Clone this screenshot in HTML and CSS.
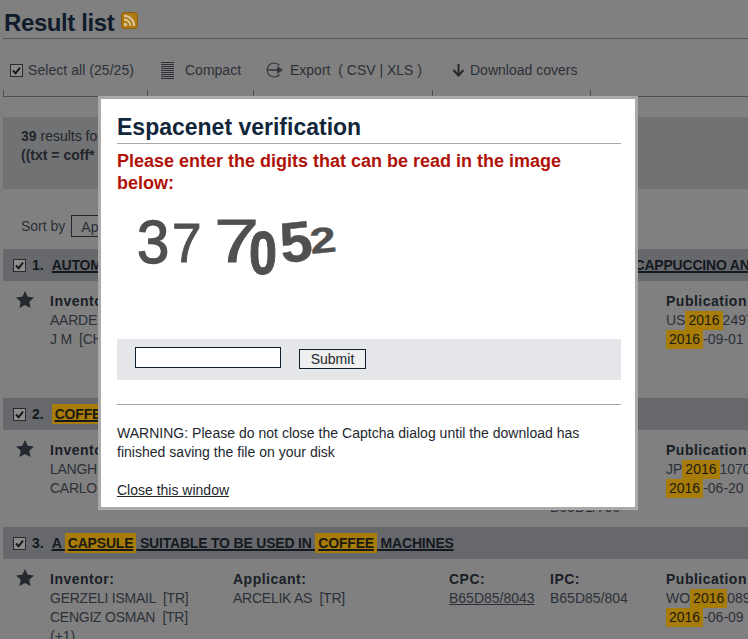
FILE: index.html
```html
<!DOCTYPE html>
<html lang="en">
<head>
  <meta charset="UTF-8">
  <title>Result list</title>
  <link rel="stylesheet" href="styles.css">
</head>
<body>
  <div class="page">
    <div class="title-bar">
      <h1>Result list</h1>
      <svg class="rss" width="17" height="17" viewBox="0 0 17 17">
        <rect x="0.5" y="0.5" width="16" height="16" rx="2.5" fill="#b07a12" stroke="#8a6010"/>
        <circle cx="4.5" cy="12.5" r="1.7" fill="#d8c9a0"/>
        <path d="M3 7.5a6.5 6.5 0 0 1 6.5 6.5M3 3.8a10.2 10.2 0 0 1 10.2 10.2" fill="none" stroke="#d8c9a0" stroke-width="1.9"/>
      </svg>
    </div>

    <div class="toolbar">
      <span class="tool tool-select">
        <svg class="check" width="13" height="13" viewBox="0 0 13 13"><rect x="0.5" y="0.5" width="12" height="12" fill="#8c8c8c" stroke="#2b2b2b"/><path d="M3 6.500l2.600 2.800L10 3.600" fill="none" stroke="#151515" stroke-width="1.900"/></svg>
        Select all (25/25)
      </span>
      <span class="tool tool-compact">
        <svg width="13" height="17" viewBox="0 0 13 17"><path d="M0 .5h13M0 2.500h13M0 4.500h13M0 6.500h13M0 8.500h13M0 10.500h13M0 12.500h13M0 14.500h13M0 16.500h13" stroke="#2d3036" stroke-width="1"/></svg>
        Compact
      </span>
      <span class="tool tool-export">
        <svg width="18" height="16" viewBox="0 0 18 16"><path d="M13.500 3.500A7 7 0 1 0 13.500 12.500" fill="none" stroke="#33363c" stroke-width="1.200"/><path d="M2 8h9" stroke="#33363c" stroke-width="1.600"/><path d="M11 4l6 4-6 4z" fill="#33363c"/></svg>
        Export &nbsp;( CSV | XLS )
      </span>
      <span class="tool tool-covers">
        <svg width="13" height="14" viewBox="0 0 13 14"><path d="M6.500 1v10" stroke="#25282d" stroke-width="2"/><path d="M1.500 7l5 5.500 5-5.500" fill="none" stroke="#25282d" stroke-width="2"/></svg>
        Download covers
      </span>
    </div>
    <div class="ticks">
      <span class="tick tick-1"></span>
      <span class="tick tick-2"></span>
      <span class="tick tick-3"></span>
      <span class="tick tick-4"></span>
      <span class="tick"></span>
    </div>

    <div class="summary">
      <div><b>39</b> results found in the Worldwide database for:</div>
      <div><b>((txt = coff* and txt = capsule) and pd = 2016)</b></div>
    </div>

    <div class="sort">
      <span>Sort by</span>
      <span class="sort-select">Applicant</span>
    </div>

    <div class="result">
      <div class="result-head">
        <svg class="check" width="13" height="13" viewBox="0 0 13 13"><rect x="0.5" y="0.5" width="12" height="12" fill="#8c8c8c" stroke="#2b2b2b"/><path d="M3 6.500l2.600 2.800L10 3.600" fill="none" stroke="#151515" stroke-width="1.900"/></svg>
        <span class="num">1.</span>
        <a class="result-title">AUTOMATIC MACHINE FOR THE PREPARATION OF MILK FOAM FOR CAFFE LATTE AND CAPPUCCINO AND ESPRESSO</a>
      </div>
      <div class="result-body body-1">
        <svg class="star" width="18" height="17" viewBox="0 0 18 17"><path d="M9 0l2.700 5.800 6.300.7-4.700 4.300 1.300 6.200L9 13.900 3.400 17l1.300-6.200L0 6.500l6.300-.7z"/></svg>
        <div class="cols">
          <div><b>Inventor:</b><br><span class="names">AARDEN HENDRIK &nbsp;[NL]<br>J M &nbsp;[CH]</span></div>
          <div><b>Applicant:</b><br><span class="names">NESTEC SA &nbsp;[CH]</span></div>
          <div><b>CPC:</b><br><a>A47J31/40</a></div>
          <div><b>IPC:</b><br>A47J31/40</div>
          <div><b>Publication</b><br>US<mark>2016</mark>2497<br><mark>2016</mark>-09-01</div>
        </div>
      </div>
    </div>

    <div class="result">
      <div class="result-head">
        <svg class="check" width="13" height="13" viewBox="0 0 13 13"><rect x="0.5" y="0.5" width="12" height="12" fill="#8c8c8c" stroke="#2b2b2b"/><path d="M3 6.500l2.600 2.800L10 3.600" fill="none" stroke="#151515" stroke-width="1.900"/></svg>
        <span class="num">2.</span>
        <a class="result-title"><mark>COFFEE</mark> CAPSULE</a>
      </div>
      <div class="result-body">
        <svg class="star" width="18" height="17" viewBox="0 0 18 17"><path d="M9 0l2.700 5.800 6.300.7-4.700 4.300 1.300 6.200L9 13.900 3.400 17l1.300-6.200L0 6.500l6.300-.7z"/></svg>
        <div class="cols">
          <div><b>Inventor:</b><br><span class="names">LANGHI MARCO<br>CARLO</span></div>
          <div><b>Applicant:</b><br><span class="names">CAFFITALY SYSTEM</span></div>
          <div><b>CPC:</b><br><a>B65D85/804</a></div>
          <div><b>IPC:</b><br>B65D85/804<br>A47J31/06<br>B65D1/706</div>
          <div><b>Publication</b><br>JP<mark>2016</mark>1070<br><mark>2016</mark>-06-20</div>
        </div>
      </div>
    </div>

    <div class="result">
      <div class="result-head">
        <svg class="check" width="13" height="13" viewBox="0 0 13 13"><rect x="0.5" y="0.5" width="12" height="12" fill="#8c8c8c" stroke="#2b2b2b"/><path d="M3 6.500l2.600 2.800L10 3.600" fill="none" stroke="#151515" stroke-width="1.900"/></svg>
        <span class="num">3.</span>
        <a class="result-title">A <mark>CAPSULE</mark> SUITABLE TO BE USED IN <mark>COFFEE</mark> MACHINES</a>
      </div>
      <div class="result-body">
        <svg class="star" width="18" height="17" viewBox="0 0 18 17"><path d="M9 0l2.700 5.800 6.300.7-4.700 4.300 1.300 6.200L9 13.900 3.400 17l1.300-6.200L0 6.500l6.300-.7z"/></svg>
        <div class="cols">
          <div><b>Inventor:</b><br><span class="names">GERZELI ISMAIL &nbsp;[TR]<br>CENGIZ OSMAN &nbsp;[TR]</span><br>(+1)</div>
          <div><b>Applicant:</b><br><span class="names">ARCELIK AS &nbsp;[TR]</span></div>
          <div><b>CPC:</b><br><a>B65D85/8043</a></div>
          <div><b>IPC:</b><br>B65D85/804</div>
          <div><b>Publication</b><br>WO<mark>2016</mark>089<br><mark>2016</mark>-06-09</div>
        </div>
      </div>
    </div>
  </div>

  <div class="dialog">
    <h2>Espacenet verification</h2>
    <p class="prompt">Please enter the digits that can be read in the image below:</p>
    <svg class="captcha" width="210" height="80" viewBox="0 0 210 80">
      <g fill="#505050" stroke="#505050" font-family="Liberation Sans, sans-serif">
        <text transform="translate(5 58) scale(1 1.050)" font-size="58" stroke-width="1.300">3</text>
        <text transform="translate(40 57) scale(0.950 1)" font-size="56" stroke-width="1">7</text>
        <text transform="translate(82 57) scale(1.450 1.100)" font-size="56" stroke-width="0.800">7</text>
        <text transform="translate(117 69) scale(0.900 1.100)" font-size="56" font-weight="bold" stroke-width="1">0</text>
        <text transform="translate(150 58) rotate(-6) scale(1 0.980)" font-size="58" font-weight="bold" stroke-width="0.500">5</text>
        <text transform="translate(179 49) rotate(-6) scale(1.250 0.950)" font-size="38" font-weight="bold" stroke-width="0.300">2</text>
      </g>
    </svg>
    <div class="answer">
      <input class="answer-input" type="text">
      <button class="answer-btn" type="button">Submit</button>
    </div>
    <p class="warning">WARNING: Please do not close the Captcha dialog until the download has finished saving the file on your disk</p>
    <a class="close-link">Close this window</a>
  </div>
</body>
</html>
```

FILE: styles.css
```css
* {
  box-sizing: border-box;
}

html, body {
  margin: 0;
  height: 639px;
  overflow: hidden;
}

body {
  background: #808080;
  color: #2c3038;
  font-family: "Liberation Sans", Arial, sans-serif;
  font-size: 14px;
  line-height: 19px;
}

.page {
  padding-left: 3px;
  width: 748px;
}

.title-bar {
  display: flex;
  align-items: flex-start;
  gap: 7px;
  height: 39px;
  padding: 11px 0 0;
  border-bottom: 1px solid #545659;
}

h1 {
  margin: 0 0 0 1px;
  font-size: 24px;
  line-height: 24px;
  letter-spacing: -0.4px;
  color: #101c2c;
}

.rss {
  margin-top: 1px;
}

.toolbar {
  display: flex;
  align-items: center;
  height: 51px;
  padding-top: 11px;
}

.tool {
  display: flex;
  align-items: center;
  white-space: nowrap;
}

.tool svg {
  flex: none;
}

.tool-select {
  gap: 5px;
  width: 158px;
  padding-left: 7px;
  letter-spacing: 0.05px;
}

.tool-compact {
  gap: 11px;
  width: 105px;
}

.tool-export {
  gap: 6px;
  width: 186px;
}

.tool-covers {
  gap: 5px;
}

.ticks {
  display: flex;
  height: 7px;
  border-bottom: 1px solid #4c4e52;
}

.tick {
  border-left: 1px solid #4c4e52;
}

.tick-1 {
  width: 144px;
}

.tick-2 {
  width: 106px;
}

.tick-3 {
  width: 179px;
}

.tick-4 {
  width: 158px;
}

.summary {
  height: 72px;
  margin-top: 20px;
  padding: 10px 18px;
  background: #717274;
  color: #23262c;
  white-space: nowrap;
}

.sort {
  display: flex;
  align-items: center;
  gap: 6px;
  height: 60px;
  padding: 14px 0 0 18px;
}

.sort-select {
  width: 120px;
  height: 22px;
  padding: 2px 9px;
  border: 1px solid #23262c;
}

.result-head {
  display: flex;
  align-items: center;
  height: 32px;
  padding: 1px 0 0 10px;
  background: #66686b;
  color: #14181f;
  font-weight: bold;
  white-space: nowrap;
  overflow: hidden;
}

.result-head .check {
  flex: none;
}

.num {
  margin: 0 8px 0 6px;
}

.result-title {
  letter-spacing: -0.2px;
  text-decoration: underline;
  text-decoration-thickness: 2px;
  color: #14181f;
}

mark {
  background: #a87c08;
  color: #1c1a10;
}

.result-title mark {
  padding: 2px 3px;
}

.cols mark {
  display: inline-block;
  height: 19px;
  padding: 0 3px;
}

.result-body {
  display: flex;
  height: 97px;
  padding: 11px 0 0 13px;
}

.body-1 {
  height: 117px;
}

.star {
  flex: none;
  fill: #24282f;
  margin-top: -1px;
}

.cols {
  display: grid;
  grid-template-columns: 183px 216px 101px 116px 90px;
  margin-left: 16px;
  white-space: nowrap;
}

.cols b {
  letter-spacing: 0.5px;
  color: #1a1e27;
}

.cols a {
  text-decoration: underline;
}

.names {
  letter-spacing: -0.25px;
}

.dialog {
  position: absolute;
  left: 98px;
  top: 96px;
  width: 540px;
  height: 414px;
  padding: 16px 14px 0 16px;
  background: #fff;
  border: 3px solid #a9a9a9;
  color: #23272e;
}

h2 {
  margin: 0;
  height: 29px;
  padding-bottom: 3px;
  border-bottom: 1px solid #a9a9a9;
  font-size: 23px;
  line-height: 25px;
  color: #12263a;
}

.prompt {
  margin: 6px 0 0;
  font-size: 18px;
  font-weight: bold;
  line-height: 22px;
  color: #b01208;
}

.captcha {
  display: block;
  margin: 11px 0 0 15px;
}

.answer {
  display: flex;
  align-items: center;
  gap: 18px;
  height: 41px;
  margin-top: 54px;
  padding: 0 18px;
  background: #e4e6e9;
}

.answer-input {
  width: 146px;
  height: 21px;
  margin: 0 0 4px;
  border: 1px solid #12202e;
  background: #fff;
}

.answer-btn {
  width: 67px;
  height: 20px;
  margin-bottom: 1px;
  padding: 0;
  border: 1px solid #12202e;
  background: #efefef;
  color: #23272e;
  font-family: "Liberation Sans", Arial, sans-serif;
  font-size: 14px;
}

.warning {
  margin: 24px 0 0;
  padding-top: 19px;
  border-top: 1px solid #a9a9a9;
  letter-spacing: 0.02px;
}

.close-link {
  display: inline-block;
  margin-top: 19px;
  text-decoration: underline;
}
```
